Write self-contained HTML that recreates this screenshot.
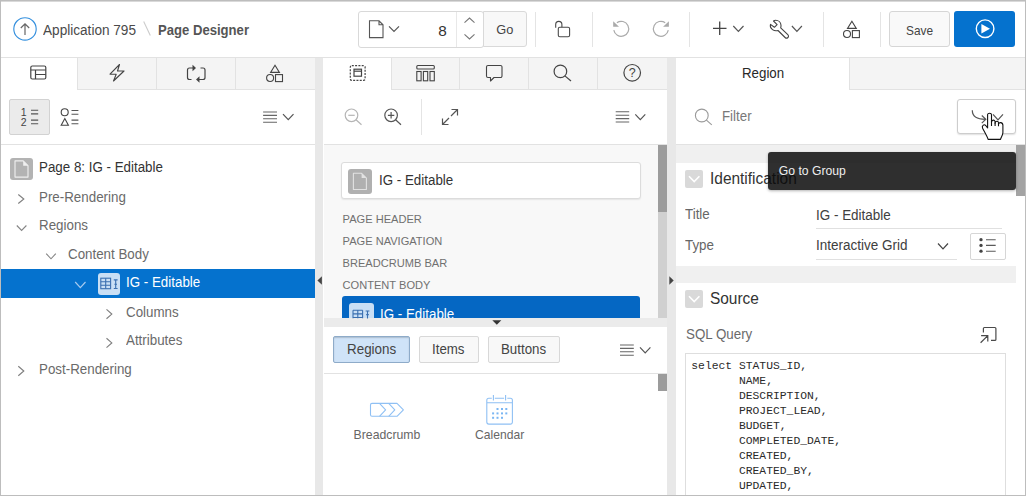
<!DOCTYPE html>
<html>
<head>
<meta charset="utf-8">
<title>Page Designer</title>
<style>
*{box-sizing:border-box;margin:0;padding:0}
html,body{width:1026px;height:496px;overflow:hidden;background:#fff}
body{font-family:"Liberation Sans",sans-serif;font-size:14px;color:#404040;position:relative}
.abs{position:absolute}
.t{position:absolute;white-space:nowrap;line-height:1}
#icons{position:absolute;left:0;top:0;z-index:10}
#cursor{position:absolute;left:0;top:0;z-index:30}
#frame{position:absolute;left:0;top:0;width:1026px;height:496px;border:1px solid #bdbdbd;z-index:50}
#frame:before{content:"";position:absolute;left:0;top:0;width:1024px;height:1px;background:rgba(160,160,160,.4)}
</style>
</head>
<body>
<div class="abs" style="left:0px;top:0px;width:1026px;height:57px;background:#fff;"></div>
<div class="abs" style="left:0px;top:57px;width:1026px;height:1px;background:#e2e2e2;"></div>
<div class="t" style="left:43.10px;top:23px;font-size:14px;color:#4a4a4a;transform:scaleX(0.9714);transform-origin:0 0;">Application 795</div>
<div class="t" style="left:158.40px;top:23px;font-size:14px;color:#555;font-weight:bold;transform:scaleX(0.9357);transform-origin:0 0;">Page Designer</div>
<div class="abs" style="left:358px;top:11px;width:126px;height:36.5px;background:#fff;border:1px solid #d9d9d9;border-radius:3px;"></div>
<div class="abs" style="left:483px;top:11px;width:44px;height:35.5px;background:#f8f8f8;border:1px solid #d9d9d9;border-radius:0 3px 3px 0;"></div>
<div class="abs" style="left:456px;top:12px;width:1px;height:34.5px;background:#e8e8e8;"></div>
<div class="t" style="left:438.20px;top:23px;font-size:15.3px;color:#333;">8</div>
<div class="t" style="left:496.30px;top:24px;font-size:12.8px;color:#444;">Go</div>
<div class="abs" style="left:535.2px;top:11.5px;width:1px;height:35px;background:#e4e4e4;"></div>
<div class="abs" style="left:592.2px;top:11.5px;width:1px;height:35px;background:#e4e4e4;"></div>
<div class="abs" style="left:689.4px;top:11.5px;width:1px;height:35px;background:#e4e4e4;"></div>
<div class="abs" style="left:823.1px;top:11.5px;width:1px;height:35px;background:#e4e4e4;"></div>
<div class="abs" style="left:880.2px;top:11.5px;width:1px;height:35px;background:#e4e4e4;"></div>
<div class="abs" style="left:889px;top:11px;width:61px;height:35.8px;background:#f9f9f9;border:1px solid #d6d6d6;border-radius:3px;"></div>
<div class="t" style="left:905.60px;top:24px;font-size:13.4px;color:#444;transform:scaleX(0.8843);transform-origin:0 0;">Save</div>
<div class="abs" style="left:954px;top:10.8px;width:61px;height:36.2px;background:#0572ce;border-radius:3px;"></div>
<div class="abs" style="left:1px;top:58px;width:314.3px;height:31px;background:#f4f4f4;"></div>
<div class="abs" style="left:1px;top:89px;width:314.3px;height:1px;background:#e2e2e2;"></div>
<div class="abs" style="left:1px;top:58px;width:76px;height:32px;background:#fff;"></div>
<div class="abs" style="left:77px;top:58px;width:1px;height:31px;background:#e2e2e2;"></div>
<div class="abs" style="left:156px;top:58px;width:1px;height:31px;background:#e2e2e2;"></div>
<div class="abs" style="left:235.3px;top:58px;width:1px;height:31px;background:#e2e2e2;"></div>
<div class="abs" style="left:323.5px;top:58px;width:343.7px;height:31px;background:#f4f4f4;"></div>
<div class="abs" style="left:323.5px;top:89px;width:343.7px;height:1px;background:#e2e2e2;"></div>
<div class="abs" style="left:323.5px;top:58px;width:67.69999999999999px;height:32px;background:#fff;"></div>
<div class="abs" style="left:391.2px;top:58px;width:1px;height:31px;background:#e2e2e2;"></div>
<div class="abs" style="left:458.8px;top:58px;width:1px;height:31px;background:#e2e2e2;"></div>
<div class="abs" style="left:527.8px;top:58px;width:1px;height:31px;background:#e2e2e2;"></div>
<div class="abs" style="left:597px;top:58px;width:1px;height:31px;background:#e2e2e2;"></div>
<div class="abs" style="left:676px;top:58px;width:350px;height:31px;background:#f4f4f4;"></div>
<div class="abs" style="left:676px;top:89px;width:350px;height:1px;background:#e2e2e2;"></div>
<div class="abs" style="left:676px;top:58px;width:173px;height:32px;background:#fff;"></div>
<div class="abs" style="left:849px;top:58px;width:1px;height:31px;background:#e2e2e2;"></div>
<div class="t" style="left:741.50px;top:66px;font-size:14px;color:#282828;transform:scaleX(0.9500);transform-origin:0 0;">Region</div>
<div class="abs" style="left:1px;top:90px;width:314.3px;height:54px;background:#fff;"></div>
<div class="abs" style="left:1px;top:144px;width:314.3px;height:1px;background:#e2e2e2;"></div>
<div class="abs" style="left:323.5px;top:90px;width:343.7px;height:54px;background:#fff;"></div>
<div class="abs" style="left:323.5px;top:144px;width:343.7px;height:1px;background:#e2e2e2;"></div>
<div class="abs" style="left:676px;top:90px;width:350px;height:54px;background:#fff;"></div>
<div class="abs" style="left:676px;top:144px;width:350px;height:1px;background:#e2e2e2;"></div>
<div class="abs" style="left:315.3px;top:57.5px;width:8.2px;height:439px;background:#e8e8e8;"></div>
<div class="abs" style="left:667.2px;top:57.5px;width:8.6px;height:439px;background:#e8e8e8;"></div>
<div class="abs" style="left:9px;top:99px;width:41px;height:35.5px;background:#ebebeb;border:1px solid #d2d2d2;border-radius:2px;"></div>
<div class="t" style="left:20.80px;top:107px;font-size:10.5px;color:#444;font-weight:normal;">1</div>
<div class="t" style="left:20.80px;top:117px;font-size:10.5px;color:#444;font-weight:normal;">2</div>
<div class="abs" style="left:1px;top:145px;width:314.3px;height:351px;background:#fff;"></div>
<div class="abs" style="left:10px;top:158px;width:23px;height:22px;background:#b3b3b3;border-radius:3px;"></div>
<div class="t" style="left:38.90px;top:160px;font-size:14px;color:#333;transform:scaleX(0.9536);transform-origin:0 0;">Page 8: IG - Editable</div>
<div class="t" style="left:38.90px;top:190px;font-size:14px;color:#6a6a6a;transform:scaleX(0.9536);transform-origin:0 0;">Pre-Rendering</div>
<div class="t" style="left:38.90px;top:218px;font-size:14px;color:#6a6a6a;transform:scaleX(0.9536);transform-origin:0 0;">Regions</div>
<div class="t" style="left:67.90px;top:247px;font-size:14px;color:#6a6a6a;transform:scaleX(0.9536);transform-origin:0 0;">Content Body</div>
<div class="abs" style="left:1px;top:269.1px;width:314.3px;height:28.7px;background:#0572ce;"></div>
<div class="abs" style="left:97.8px;top:273px;width:22.5px;height:22px;background:#c9dff5;border-radius:3px;"></div>
<div class="t" style="left:126.10px;top:275px;font-size:14px;color:#fff;transform:scaleX(0.9536);transform-origin:0 0;">IG - Editable</div>
<div class="t" style="left:126.40px;top:305px;font-size:14px;color:#6a6a6a;transform:scaleX(0.9536);transform-origin:0 0;">Columns</div>
<div class="t" style="left:126.40px;top:333px;font-size:14px;color:#6a6a6a;transform:scaleX(0.9536);transform-origin:0 0;">Attributes</div>
<div class="t" style="left:38.90px;top:362px;font-size:14px;color:#6a6a6a;transform:scaleX(0.9536);transform-origin:0 0;">Post-Rendering</div>
<div class="t" style="left:628.70px;top:67px;font-size:12.5px;color:#444;">?</div>
<div class="abs" style="left:421px;top:99px;width:1px;height:36px;background:#e4e4e4;"></div>
<div class="abs" style="left:323.5px;top:145px;width:343.7px;height:174px;background:#f8f8f8;"></div>
<div class="abs" style="left:658px;top:145px;width:9.2px;height:173.5px;background:#d0d0d0;"></div>
<div class="abs" style="left:658px;top:145px;width:9.2px;height:66.7px;background:#9c9c9c;"></div>
<div class="abs" style="left:341px;top:162.2px;width:299.5px;height:36.9px;background:#fff;border:1px solid #dcdcdc;border-radius:3px;box-shadow:0 1px 1.500px rgba(0,0,0,.08);"></div>
<div class="abs" style="left:347.8px;top:168.8px;width:24.2px;height:25.2px;background:#b0b0b0;border-radius:3px;"></div>
<div class="t" style="left:378.50px;top:173px;font-size:14px;color:#333;transform:scaleX(0.9536);transform-origin:0 0;">IG - Editable</div>
<div class="t" style="left:342.60px;top:214px;font-size:11.08px;color:#707070;">PAGE HEADER</div>
<div class="t" style="left:342.60px;top:236px;font-size:11.08px;color:#707070;">PAGE NAVIGATION</div>
<div class="t" style="left:342.60px;top:258px;font-size:11.08px;color:#707070;">BREADCRUMB BAR</div>
<div class="t" style="left:342.60px;top:280px;font-size:11.08px;color:#707070;">CONTENT BODY</div>
<div class="abs" style="left:341.800px;top:295.900px;width:298.500px;height:23px;background:#0567c3;border-radius:3px 3px 0 0;overflow:hidden"></div>
<div class="abs" style="left:323.500px;top:296px;width:343.700px;height:22px;overflow:hidden">
<div class="abs" style="left:25.300px;top:7px;width:25.200px;height:24px;background:#c9dff5;border-radius:3px"></div>
<div class="t" style="left:56.200px;top:11px;font-size:14px;color:#fff;transform:scaleX(0.9536);transform-origin:0 0">IG - Editable</div>
</div>
<div class="abs" style="left:323.5px;top:318px;width:343.7px;height:8.6px;background:#ebebeb;"></div>
<div class="abs" style="left:323.5px;top:326.6px;width:343.7px;height:169.4px;background:#fff;"></div>
<div class="abs" style="left:323.5px;top:373px;width:343.7px;height:1px;background:#e2e2e2;"></div>
<div class="abs" style="left:333px;top:336px;width:77px;height:27px;background:#cfe3f8;border:1px solid #8eabc9;border-radius:2px;box-shadow:inset 0 1px 1.500px rgba(0,0,0,.18);"></div>
<div class="t" style="left:346.80px;top:342px;font-size:14px;color:#444;transform:scaleX(0.9571);transform-origin:0 0;">Regions</div>
<div class="abs" style="left:419px;top:336px;width:60px;height:27px;background:#f8f8f8;border:1px solid #d8d8d8;border-radius:2px;"></div>
<div class="t" style="left:432.30px;top:342px;font-size:14px;color:#444;transform:scaleX(0.9500);transform-origin:0 0;">Items</div>
<div class="abs" style="left:488px;top:336px;width:72px;height:27px;background:#f8f8f8;border:1px solid #d8d8d8;border-radius:2px;"></div>
<div class="t" style="left:500.80px;top:342px;font-size:14px;color:#444;transform:scaleX(0.9500);transform-origin:0 0;">Buttons</div>
<div class="abs" style="left:658px;top:374px;width:9.2px;height:16.6px;background:#9c9c9c;"></div>
<div class="t" style="left:353.60px;top:429px;font-size:12.25px;color:#666;">Breadcrumb</div>
<div class="t" style="left:475.10px;top:429px;font-size:12.1px;color:#666;">Calendar</div>
<div class="abs" style="left:676px;top:145px;width:340px;height:351px;background:#f0f0f0;"></div>
<div class="abs" style="left:1016px;top:145px;width:10px;height:351px;background:#fff;"></div>
<div class="abs" style="left:1016.3px;top:145px;width:8.7px;height:51px;background:#a3a3a3;"></div>
<div class="t" style="left:722.00px;top:109px;font-size:14px;color:#787878;transform:scaleX(0.9500);transform-origin:0 0;">Filter</div>
<div class="abs" style="left:956.9px;top:99.2px;width:58.8px;height:35.2px;background:#fff;border:1px solid #cdcdcd;border-radius:3px;box-shadow:0 1px 1.500px rgba(0,0,0,.12);"></div>
<div class="abs" style="left:676px;top:163px;width:340px;height:103.3px;background:#fff;"></div>
<div class="abs" style="left:685px;top:170px;width:18px;height:18px;background:#d9d9d9;border-radius:2px;"></div>
<div class="t" style="left:709.70px;top:171px;font-size:16px;color:#333;transform:scaleX(0.9656);transform-origin:0 0;">Identification</div>
<div class="t" style="left:685.40px;top:207px;font-size:14px;color:#666;transform:scaleX(0.9536);transform-origin:0 0;">Title</div>
<div class="t" style="left:816.30px;top:208px;font-size:14px;color:#404040;transform:scaleX(0.9600);transform-origin:0 0;">IG - Editable</div>
<div class="abs" style="left:816px;top:228px;width:185.5px;height:1px;background:#e0e0e0;"></div>
<div class="t" style="left:685.40px;top:238px;font-size:14px;color:#666;transform:scaleX(0.9536);transform-origin:0 0;">Type</div>
<div class="t" style="left:816.30px;top:238px;font-size:14px;color:#404040;transform:scaleX(0.9636);transform-origin:0 0;">Interactive Grid</div>
<div class="abs" style="left:816px;top:259px;width:140.5px;height:1px;background:#e0e0e0;"></div>
<div class="abs" style="left:970.3px;top:233.3px;width:35.4px;height:26.4px;background:#fff;border:1px solid #d6d6d6;border-radius:2px;"></div>
<div class="abs" style="left:676px;top:282.6px;width:340px;height:213.4px;background:#fff;"></div>
<div class="abs" style="left:685px;top:290px;width:18px;height:18px;background:#d9d9d9;border-radius:2px;"></div>
<div class="t" style="left:709.70px;top:291px;font-size:16px;color:#333;transform:scaleX(0.9644);transform-origin:0 0;">Source</div>
<div class="t" style="left:685.50px;top:327px;font-size:14px;color:#6a6a6a;transform:scaleX(0.9536);transform-origin:0 0;">SQL Query</div>
<div class="abs" style="left:685px;top:353px;width:321px;height:143px;background:#fff;border:1px solid #dedede;"></div>
<pre class="abs" style="left:691.300px;top:359.200px;font-family:'Liberation Mono',monospace;font-size:11.35px;line-height:14.990px;color:#2a2a2a">select STATUS_ID,
       NAME,
       DESCRIPTION,
       PROJECT_LEAD,
       BUDGET,
       COMPLETED_DATE,
       CREATED,
       CREATED_BY,
       UPDATED,</pre>
<div class="abs" style="left:768px;top:152px;width:248px;height:37.600px;background:rgba(10,10,10,.85);border-radius:3px;box-shadow:0 1px 3px rgba(0,0,0,.3);z-index:20"></div>
<div class="t" style="left:778.80px;top:165px;font-size:12.2px;color:#eee;z-index:21;">Go to Group</div>
<svg id="icons" width="1026" height="496" viewBox="0 0 1026 496">
<circle cx="25" cy="28.9" r="11.2" fill="none" stroke="#3590de" stroke-width="1.15"/>
<path d="M25 35V23.800M20.800 28L25 23.800l4.200 4.200" fill="none" stroke="#666" stroke-width="1.2"/>
<line x1="143.700" y1="21.500" x2="150.300" y2="35.500" stroke="#ccc" stroke-width="1.1"/>
<path d="M369.500 20.800H379l4 4V37.600H369.500Z M379 20.800V24.800H383" fill="none" stroke="#555" stroke-width="1.1"/>
<polyline points="389,26.4 394.0,31.5 399,26.4" fill="none" stroke="#555" stroke-width="1.2"/>
<polyline points="464.500,22.600 469.500,18 474.500,22.600" fill="none" stroke="#777" stroke-width="1.1"/>
<polyline points="464.500,34.400 469.500,39 474.500,34.400" fill="none" stroke="#777" stroke-width="1.1"/>
<rect x="558.300" y="27.300" width="11.300" height="9.500" rx="1.500" fill="none" stroke="#4a4a4a" stroke-width="1.1"/>
<path d="M555.700 27.800V24.500a3.100 3.100 0 0 1 6.200 0V27.300" fill="none" stroke="#4a4a4a" stroke-width="1.1"/>
<path d="M616.90 22.66A7.5 7.5 0 1 1 613.81 30.10" fill="none" stroke="#aaa" stroke-width="1.2"/>
<path d="M613.200 21.200V26.700H619Z" fill="#aaa"/>
<path d="M665.20 22.66A7.5 7.5 0 1 0 668.29 30.10" fill="none" stroke="#aaa" stroke-width="1.2"/>
<path d="M668.900 21.200V26.700H663.100Z" fill="#aaa"/>
<path d="M713 28.400H726.500M719.700 21.600V35.100" fill="none" stroke="#444" stroke-width="1.3"/>
<polyline points="733.3,26 738.4,31.3 743.5,26" fill="none" stroke="#555" stroke-width="1.2"/>
<path d="M775.600 20.300C778.500 20.300 780.800 22.500 781 25.200C781.100 26.300 780.900 27 780.700 27.800L787.800 34.700C788.800 35.700 788.600 36.900 787.900 37.500C787.100 38.300 785.900 38.300 785.100 37.500L778 30.500C776.500 30.900 774.300 30.900 772.500 29.600C770.600 28.200 770 26.200 770.500 24.400L774.400 27.300L777.100 24.700L773.500 21C774.100 20.600 774.800 20.300 775.600 20.300Z" fill="none" stroke="#444" stroke-width="1.1" stroke-linejoin="round"/>
<polyline points="791.9,26 796.9,31.3 801.9,26" fill="none" stroke="#555" stroke-width="1.2"/>
<g transform="translate(843.1,21.0)" fill="none" stroke="#444" stroke-width="1.1"><path d="M8.800 0.300L13.200 7.400H4.400Z"/><circle cx="3.900" cy="13" r="3.500"/><rect x="9.300" y="9.600" width="7" height="7"/></g>
<circle cx="985.100" cy="28.700" r="8.800" fill="none" stroke="#fff" stroke-width="1.4"/>
<path d="M981.400 24.100V33.500L990 28.800Z" fill="#fff"/>
<path d="M317.400 280.500L321.900 276.300V284.700Z" fill="#444"/>
<path d="M673.700 280.500L669.300 276.300V284.700Z" fill="#444"/>
<g fill="none" stroke="#444" stroke-width="1.2"><rect x="30.800" y="66" width="15" height="13" rx="1.500"/><path d="M30.800 70H45.800M35.500 70V79M35.500 74.500H45.800"/></g>
<path d="M119.500 64.500L110 74.200H116.200L113.500 81L124 71H117.500Z" fill="none" stroke="#444" stroke-width="1.1" stroke-linejoin="round"/>
<g fill="none" stroke="#444" stroke-width="1.200"><path d="M191.500 79.500H189.500a2 2 0 0 1 -2 -2V70a2 2 0 0 1 2 -2H193"/><path d="M200.500 68H203a2 2 0 0 1 2 2V77.500a2 2 0 0 1 -2 2H198"/></g>
<path d="M192.500 64.800L196 68L192.500 71.200Z" fill="#444"/><path d="M199.500 76.300L196 79.500L199.500 82.700Z" fill="#444"/>
<g transform="translate(266.2,65.0)" fill="none" stroke="#444" stroke-width="1.1"><path d="M8.800 0.300L13.200 7.400H4.400Z"/><circle cx="3.900" cy="13" r="3.500"/><rect x="9.300" y="9.600" width="7" height="7"/></g>
<path d="M31 110.200H38.200M31 113.900H38.200M31 120.100H38.200M31 123.700H38.200" stroke="#555" stroke-width="1.100" fill="none"/>
<circle cx="64.700" cy="112.300" r="3.500" fill="none" stroke="#444" stroke-width="1.100"/><path d="M64.800 118.600L68.400 125.300H61.200Z" fill="none" stroke="#444" stroke-width="1.100"/>
<path d="M71.500 110.500H78.400M71.500 114.300H78.400M71.500 120.100H78.400M71.500 123.800H78.400" stroke="#555" stroke-width="1.100" fill="none"/>
<path d="M263.1 112H277M263.1 115.4H277M263.1 118.8H277M263.1 122.2H277" stroke="#666" stroke-width="1.100" fill="none"/>
<polyline points="283,114.2 288.25,119.7 293.5,114.2" fill="none" stroke="#555" stroke-width="1.2"/>
<path d="M15.0 160.9H23.2L28.0 165.7V177.1H15.0Z" fill="none" stroke="#f0f0f0" stroke-width="1.1" stroke-linejoin="round"/><path d="M23.2 160.9V165.7H28.0Z" fill="#f0f0f0"/>
<polyline points="18.3,194.5 23.8,199.0 18.3,203.5" fill="none" stroke="#808080" stroke-width="1.15"/>
<polyline points="16.8,225.5 21.6,230.5 26.4,225.5" fill="none" stroke="#858585" stroke-width="1.1"/>
<polyline points="46.2,253.7 51.0,258.8 55.8,253.7" fill="none" stroke="#858585" stroke-width="1.1"/>
<polyline points="75.2,282 80.35,287.6 85.5,282" fill="none" stroke="#a6caef" stroke-width="1.2"/>
<g fill="none" stroke="#3a6fb0" stroke-width="1.100"><rect x="100.8" y="278.2" width="9.800" height="10.500"/><path d="M100.8 281.7h9.800M100.8 285.2h9.800M105.7 278.2v10.500"/><path d="M113.8 279.9h3.800M113.8 288.5h3.800M115.7 279.9v8.600M114.4 284.3h2.600"/></g>
<polyline points="106.5,309.4 111.8,314.1 106.5,318.8" fill="none" stroke="#808080" stroke-width="1.15"/>
<polyline points="106.5,338.2 111.8,342.9 106.5,347.6" fill="none" stroke="#808080" stroke-width="1.15"/>
<polyline points="18.3,366.3 23.8,371.05 18.3,375.8" fill="none" stroke="#808080" stroke-width="1.15"/>
<rect x="350.300" y="65.600" width="14.800" height="14.800" rx="1.500" fill="none" stroke="#444" stroke-width="1.200" stroke-dasharray="2 1.300"/>
<rect x="354" y="69.200" width="7.500" height="7" fill="none" stroke="#444" stroke-width="1.200"/><path d="M354 71.200H361.500" stroke="#444" stroke-width="1.200"/>
<g fill="none" stroke="#444" stroke-width="1.100"><rect x="416.800" y="65.500" width="17.500" height="3.500" rx="1"/><rect x="416.800" y="71.500" width="4.300" height="9.300"/><rect x="423.400" y="71.500" width="4.300" height="9.300"/><rect x="430" y="71.500" width="4.300" height="9.300"/></g>
<path d="M488 65.500H500.500a1.500 1.500 0 0 1 1.500 1.500V76a1.500 1.500 0 0 1 -1.500 1.500H494L490.500 81V77.500H488a1.500 1.500 0 0 1 -1.500 -1.500V67a1.500 1.500 0 0 1 1.500 -1.500Z" fill="none" stroke="#444" stroke-width="1.100" stroke-linejoin="round"/>
<circle cx="560.4" cy="71.4" r="6.3" fill="none" stroke="#444" stroke-width="1.2"/><path d="M564.9 75.9L571 81" stroke="#444" stroke-width="1.2" fill="none"/>
<circle cx="632.200" cy="72.800" r="8.300" fill="none" stroke="#444" stroke-width="1.200"/>
<circle cx="351.5" cy="115.3" r="6.3" fill="none" stroke="#b5b5b5" stroke-width="1.2"/><path d="M356.0 119.8L361.5 124.7" stroke="#b5b5b5" stroke-width="1.2" fill="none"/>
<path d="M348.3 115.3H354.7" stroke="#b5b5b5" stroke-width="1.2"/>
<circle cx="391.1" cy="115.3" r="6.3" fill="none" stroke="#555" stroke-width="1.2"/><path d="M395.6 119.8L401 124.7" stroke="#555" stroke-width="1.2" fill="none"/>
<path d="M387.90000000000003 115.3H394.3M391.1 112.1V118.5" stroke="#555" stroke-width="1.2"/>
<path d="M451.500 109.500H457.500V115.500M457.500 109.500L451 116M448.500 124.500H442.500V118.500M442.500 124.500L449 118" fill="none" stroke="#555" stroke-width="1.200"/>
<path d="M615.7 111.8H629.2M615.7 115.2H629.2M615.7 118.6H629.2M615.7 122H629.2" stroke="#666" stroke-width="1.100" fill="none"/>
<polyline points="635.3,114.4 640.3,119.6 645.3,114.4" fill="none" stroke="#555" stroke-width="1.2"/>
<path d="M353.4 173.3H361.6L366.4 178.1V189.5H353.4Z" fill="none" stroke="#e2e2e2" stroke-width="1.1" stroke-linejoin="round"/><path d="M361.6 173.3V178.1H366.4Z" fill="#e2e2e2"/>
<g fill="none" stroke="#3a6fb0" stroke-width="1.100"><path d="M353 310.300h9.600M353 310.300v8M357.800 310.300v8M362.600 310.300v8M353 313.900h9.600M353 317.500h9.600M365.600 311h3.800M367.500 311v7.500M366.200 314.600h2.600"/></g>
<path d="M492.300 320.200H501.300L496.800 324.700Z" fill="#333"/>
<path d="M620 345H633.8M620 348.4H633.8M620 351.8H633.8M620 355.2H633.8" stroke="#666" stroke-width="1.100" fill="none"/>
<polyline points="640,347.4 645.2,352.8 650.4,347.4" fill="none" stroke="#555" stroke-width="1.2"/>
<g fill="none" stroke="#8fc0f4" stroke-width="1.100" stroke-linejoin="round"><path d="M372 403.400H397L403.400 409.800L397 416.300H372a1.500 1.500 0 0 1 -1.500 -1.500V404.900a1.500 1.500 0 0 1 1.500 -1.500Z"/><path d="M379.500 403.400L385.600 409.800L379.500 416.300M388.700 403.400L394.800 409.800L388.700 416.300"/></g>
<g fill="none" stroke="#8fc0f4" stroke-width="1.100"><path d="M491.800 398.300H488.800a2 2 0 0 0 -2 2V422.100a2 2 0 0 0 2 2H510.400a2 2 0 0 0 2 -2V400.300a2 2 0 0 0 -2 -2H507.300M494.800 398.300H504.100M486.800 402.700H512.400M493.400 395V400.500M505.600 395V400.500"/></g>
<g fill="#7ab6f3"><rect x="496.5" y="408.0" width="2" height="2"/><rect x="501.0" y="408.0" width="2" height="2"/><rect x="505.3" y="408.0" width="2" height="2"/><rect x="492.1" y="412.4" width="2" height="2"/><rect x="496.5" y="412.4" width="2" height="2"/><rect x="501.0" y="412.4" width="2" height="2"/><rect x="505.3" y="412.4" width="2" height="2"/><rect x="492.1" y="416.8" width="2" height="2"/><rect x="496.5" y="416.8" width="2" height="2"/><rect x="501.0" y="416.8" width="2" height="2"/></g>
<circle cx="701.8" cy="115.5" r="6.4" fill="none" stroke="#9a9a9a" stroke-width="1.1"/><path d="M706.4 120.1L711.8 124.9" stroke="#9a9a9a" stroke-width="1.1" fill="none"/>
<path d="M972.300 110.200C972.300 116 976.500 119.300 985.500 119.300M981.800 115.500L985.800 119.300L981.800 123.100" fill="none" stroke="#555" stroke-width="1.200"/>
<polyline points="993,114.3 998.0,119.8 1003,114.3" fill="none" stroke="#555" stroke-width="1.2"/>
<polyline points="689,176.3 694.2,181.6 699.4,176.3" fill="none" stroke="#fff" stroke-width="1.6"/>
<polyline points="938,243.5 943.0,248.9 948,243.5" fill="none" stroke="#444" stroke-width="1.2"/>
<g fill="#444"><circle cx="981" cy="239.700" r="1.650"/><circle cx="981" cy="245.400" r="1.650"/><circle cx="981" cy="251.200" r="1.650"/></g><path d="M986 239.700H995.700M986 245.400H995.700M986 251.200H995.700" stroke="#5a5a5a" stroke-width="1.100"/>
<polyline points="689,296.3 694.2,301.6 699.4,296.3" fill="none" stroke="#fff" stroke-width="1.6"/>
<path d="M983.400 332.600V328.500a1 1 0 0 1 1 -1H994.900a1 1 0 0 1 1 1V339.400a1 1 0 0 1 -1 1H991M981.100 335.600H987.800V341.600M987.800 335.600L980.600 342.700" fill="none" stroke="#4a4a4a" stroke-width="1.200"/>
</svg>
<svg id="cursor" width="1026" height="496" viewBox="0 0 1026 496"><g transform="translate(982.100,113.100)" stroke="#111" stroke-width="1.100" fill="#fff" stroke-linejoin="round"><path d="M5.500 1.600C5.500 -0.300 9.400 -0.300 9.400 1.600V9.200C9.400 6.300 13 6.400 13 8.800V10.200C13 7.500 16.400 7.600 16.400 9.800V11.200C16.400 8.700 20.800 8.900 20.800 12.200V19.500C20.800 22 19 24 18.400 26.300H6C5 23 2.500 19 0.500 15.200C-0.600 12.800 1.800 10.600 3.600 12.400L5.500 14.800Z"/><path d="M9.400 8.500V12.800M13 9.500V13M16.400 10.500V13.200" fill="none"/></g></svg>
<div id="frame"></div>
</body>
</html>
